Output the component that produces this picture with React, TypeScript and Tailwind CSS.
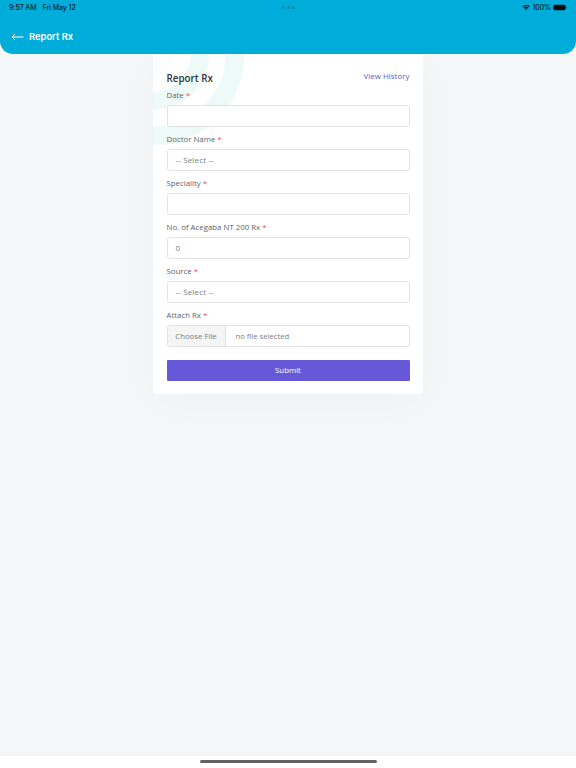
import { ReactNode } from "react";
import clsx from "clsx";

const inputStyle =
	"flex h-[22px] items-center rounded-[3px] border border-[#e0e2e5] bg-white text-[8px] text-[#7b7e82]";

const fields = [
	{ label: "Date", value: "" },
	{ label: "Doctor Name", value: "-- Select --" },
	{ label: "Speciality", value: "" },
	{ label: "No. of Acegaba NT 200 Rx", value: "0" },
	{ label: "Source", value: "-- Select --" },
];

const StatusBar = () => (
	<div className="relative flex h-[14px] items-center justify-between pl-[9px] pr-[8px] font-[Inter] text-[7px] font-medium leading-none text-[#06242d]">
		<div className="flex gap-[6px] tracking-[-0.07px]">
			<span>9:57 AM</span>
			<span>Fri May 12</span>
		</div>
		<div className="absolute left-[282px] top-[6px] flex gap-[2px]">
			<i className="size-[3px] rounded-full bg-[#078bb0]" />
			<i className="size-[3px] rounded-full bg-[#078bb0]" />
			<i className="size-[3px] rounded-full bg-[#078bb0]" />
		</div>
		<div className="flex items-center">
			<svg width="8" height="7" viewBox="0 0 18 14" fill="none" stroke="currentColor" strokeWidth="3">
				<path d="M1.5 5.5C5.8 1.2 12.2 1.2 16.5 5.5M4.5 8.5c2.6-2.5 6.4-2.5 9 0" />
				<path d="M6.5 10.5c1.5-1.3 3.5-1.3 5 0L9 13z" fill="currentColor" stroke="none" />
			</svg>
			<span className="ml-[2px] tracking-[-0.07px]">100%</span>
			<svg className="ml-[2px]" width="15" height="7" viewBox="0 0 15 7">
				<rect x=".25" y=".75" width="12.5" height="5.5" rx="1.7" fill="#000d12" />
				<path d="M13.5 2.5v2q1-.2 1-1t-1-1" fill="#087b9e" />
			</svg>
		</div>
	</div>
);

const Header = () => (
	<header className="h-[54px] rounded-b-[13px] bg-[#00acd9]">
		<StatusBar />
		<div className="flex h-[45px] items-center pl-[11px] text-white">
			<svg width="13" height="8" viewBox="0 0 13 8" fill="none" stroke="currentColor">
				<path d="M12.5 4H1M4 1 1 4l3 3" />
			</svg>
			<h1 className="ml-[5px] font-[Inter] text-[9.4px] font-semibold leading-none">Report Rx</h1>
		</div>
	</header>
);

const Label = ({ children }: { children: ReactNode }) => (
	<span className="mb-[4px] block h-[12px] whitespace-pre text-[7.8px] leading-[12px] tracking-[0.02px] text-[#606368]">
		{children} <span className="text-[#ee4964]">*</span>
	</span>
);

const App = () => {
	return (
		<div className="flex h-screen flex-col overflow-hidden bg-[#f4f6f8] font-['Open_Sans',sans-serif]">
			<div className="bg-white">
				<Header />
			</div>
			<main className="flex-1 overflow-hidden">
				<form className="relative mx-auto h-[340px] w-[270px] overflow-hidden rounded-b-[4px] bg-white px-[13.5px] pt-[16px] shadow-[0_8px_44px_rgba(50,60,70,0.025)]">
					<svg className="absolute left-0 top-0" width="100" height="96" fill="none" stroke="#edfaf7">
						<circle cx="0" cy="0" r="82" strokeWidth="19" />
						<circle cx="0" cy="0" r="47" strokeWidth="18" />
						<circle cx="0" cy="0" r="20" fill="#fafdfc" stroke="none" />
					</svg>
					<div className="relative">
						<div className="flex h-[19px] justify-between">
							<h2 className="text-[9.8px] font-semibold leading-[17px] text-[#303338]">Report Rx</h2>
							<a className="text-[7.9px] leading-[13px] tracking-[0.04px] text-[#6658d3]">View History</a>
						</div>
						{fields.map(({ label, value }) => (
							<label key={label} className="mb-[6px] block">
								<Label>{label}</Label>
								<span className={clsx(inputStyle, "px-[8px] leading-[12px] tracking-[0.15px]")}>{value}</span>
							</label>
						))}
						<Label>Attach Rx</Label>
						<div className={clsx(inputStyle, "overflow-hidden")}>
							<span className="flex h-full w-[58px] items-center justify-center border-r border-[#dedfe3] bg-[#f5f5f5] pt-px text-[7.8px]">Choose File</span>
							<span className="ml-[10px] pt-px text-[7.7px]">no file selected</span>
						</div>
						<button className="mt-[13px] block h-[21px] w-full rounded-[1px] bg-[#6658d9] text-[7.8px] text-white">Submit</button>
					</div>
				</form>
			</main>
			<footer className="flex h-[12px] justify-center bg-white pt-[4px]">
				<div className="h-[3px] w-[177px] rounded-full bg-[#626262]" />
			</footer>
		</div>
	);
};

export default App;
